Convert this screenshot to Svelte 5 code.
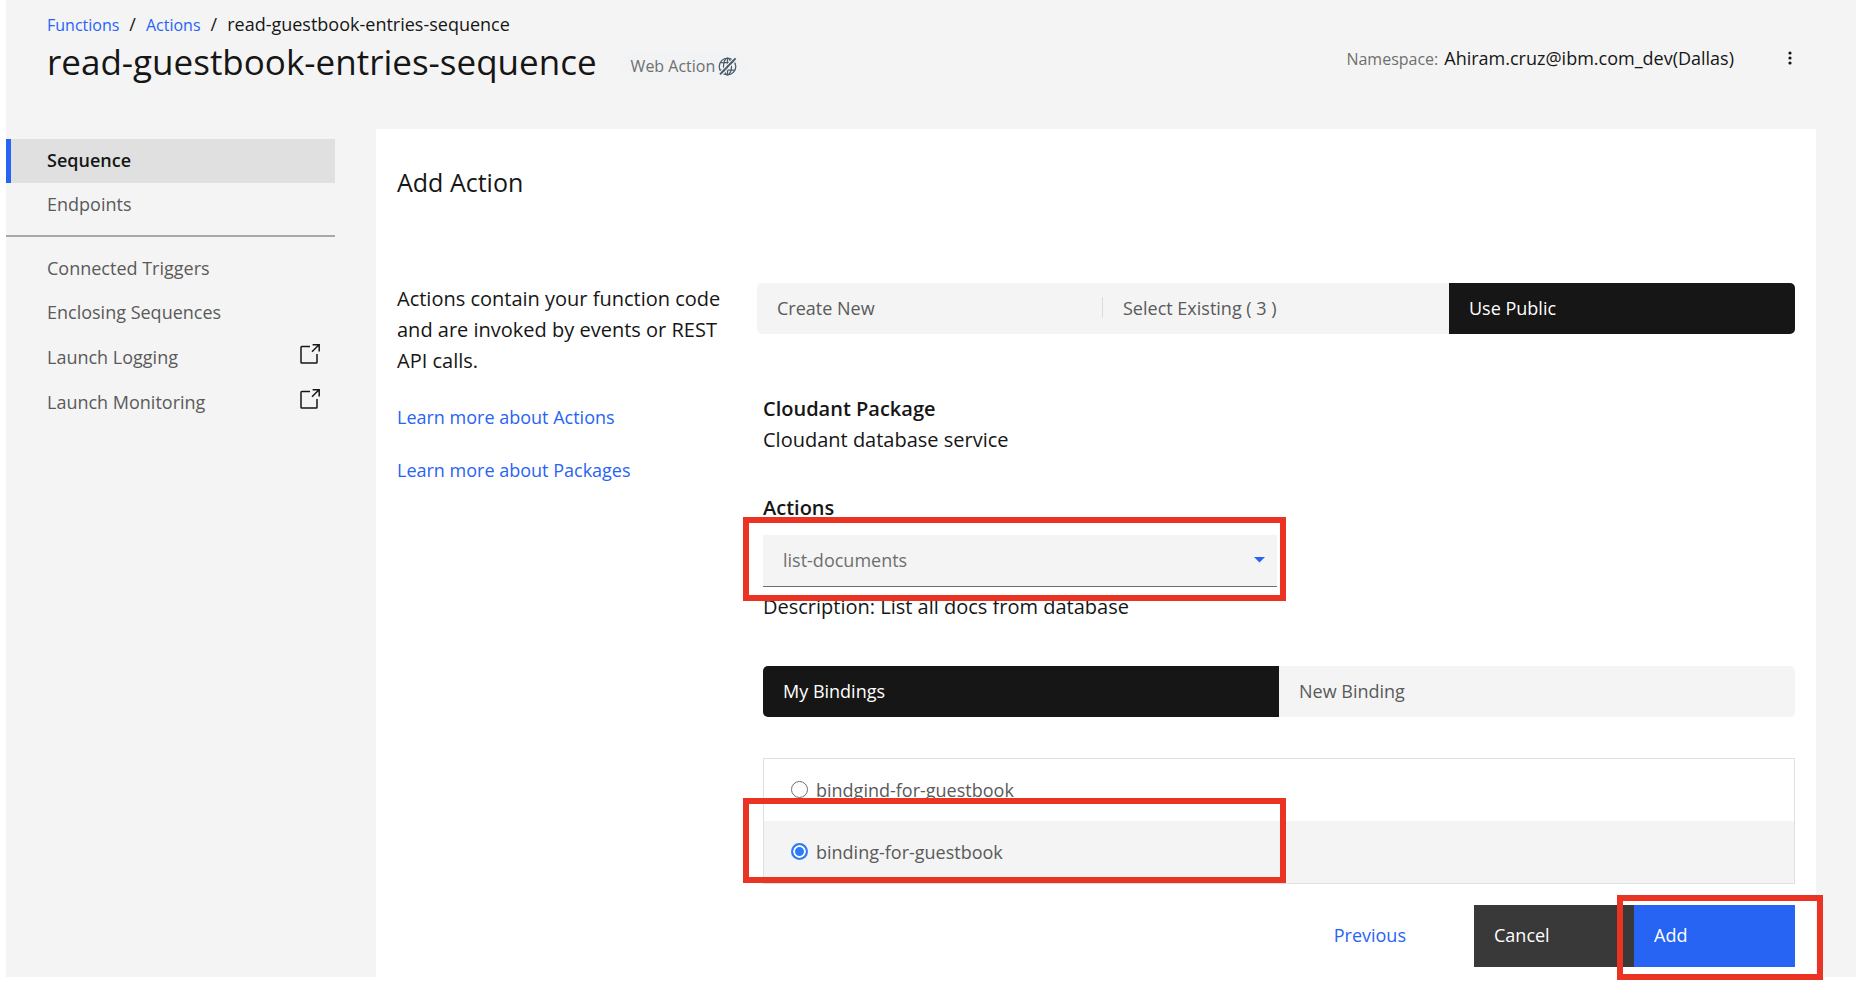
<script>
  const sequenceName = 'read-guestbook-entries-sequence';
  const primaryNav = ['Sequence', 'Endpoints'];
  const secondaryNav = [
    { label: 'Connected Triggers', external: false },
    { label: 'Enclosing Sequences', external: false },
    { label: 'Launch Logging', external: true },
    { label: 'Launch Monitoring', external: true }
  ];
  const sources = ['Create New', 'Select Existing ( 3 )', 'Use Public'];
  const bindingTabs = ['My Bindings', 'New Binding'];
  const bindings = ['bindgind-for-guestbook', 'binding-for-guestbook'];

  let page = $state('Sequence');
  let source = $state(2);
  let bindingTab = $state(0);
  let binding = $state('binding-for-guestbook');
  let action = $state('list-documents');
</script>

{#snippet tabs(items, current, choose)}
  <div class="tabs" role="tablist">
    {#each items as item, i}
      <button
        type="button"
        role="tab"
        class="tab"
        class:active={i === current}
        class:divided={i !== current && i + 1 < items.length && i + 1 !== current}
        aria-selected={i === current}
        onclick={() => choose(i)}>{item}</button>
    {/each}
  </div>
{/snippet}

<div class="page">
  <header>
    <div class="heading">
      <nav class="crumbs" aria-label="Breadcrumb">
        <a href="#functions">Functions</a>
        <span>/</span>
        <a href="#actions">Actions</a>
        <span>/</span>
        <span>{sequenceName}</span>
      </nav>
      <div class="title">
        <h1>{sequenceName}</h1>
        <span class="badge">
          Web Action
          <svg width="19" height="19" viewBox="0 0 19 19" fill="none" stroke="#4d5d69" aria-hidden="true">
            <g stroke-width="1.3">
              <circle cx="9.5" cy="9.5" r="8.3" />
              <ellipse cx="9.5" cy="9.5" rx="4" ry="8.3" />
              <path d="M9.5 1.2v16.6M2.4 5.6h14.2M2.4 13.2h14.2" />
            </g>
            <path d="M1.2 16L16 0.8M3.4 18.4L18.4 3" stroke="#f1f3f5" stroke-width="1.2" />
            <path d="M2 17.4L17.6 1.4" stroke-width="2" />
          </svg>
        </span>
      </div>
    </div>
    <div class="namespace">
      <span class="key">Namespace:</span>
      <span>Ahiram.cruz@ibm.com_dev(Dallas)</span>
      <button type="button" class="more" aria-label="More options">
        <svg width="4" height="16" viewBox="0 0 4 16" fill="#161616" aria-hidden="true">
          <circle cx="2" cy="2" r="1.6" /><circle cx="2" cy="7" r="1.6" /><circle cx="2" cy="12" r="1.6" />
        </svg>
      </button>
    </div>
  </header>

  <div class="body">
    <nav class="side" aria-label="Sequence sections">
      {#each primaryNav as label}
        <a href="#{label}" class:current={page === label} onclick={() => (page = label)}>{label}</a>
      {/each}
      <hr />
      {#each secondaryNav as item}
        <a href="#{item.label}" class:external={item.external}>
          {item.label}
          {#if item.external}
            <svg width="20" height="20" viewBox="0 0 20 20" fill="none" stroke="#161616" stroke-width="1.5" aria-hidden="true">
              <path d="M10 2.6H1.8q-.8 0-.8.8v14.8q0 .8.8.8h14.4q.8 0 .8-.8v-8.2" />
              <path d="M12 7.8l7-7M12.6.8h6.6v6.6" />
            </svg>
          {/if}
        </a>
      {/each}
    </nav>

    <main>
      <h2>Add Action</h2>
      <div class="columns">
        <aside>
          <p>Actions contain your function code and are invoked by events or REST API calls.</p>
          <a href="#about-actions">Learn more about Actions</a>
          <a href="#about-packages">Learn more about Packages</a>
        </aside>

        <form onsubmit={(e) => e.preventDefault()}>
          {@render tabs(sources, source, (i) => (source = i))}

          <div class="details">
            <h3>Cloudant Package</h3>
            <p>Cloudant database service</p>

            <label class="actions-label" for="action">Actions</label>
            <div class="picker">
              <select id="action" bind:value={action}>
                <option>list-documents</option>
              </select>
              <svg width="11" height="6" viewBox="0 0 11 6" fill="#2864f4" aria-hidden="true"><path d="M0 0h11L5.5 5.5z" /></svg>
              <span class="callout callout-select"></span>
            </div>
            <p>Description: List all docs from database</p>

            <div class="binding-tabs">
              {@render tabs(bindingTabs, bindingTab, (i) => (bindingTab = i))}
            </div>

            <div class="bindings" role="radiogroup" aria-label="Bindings">
              {#each bindings as name}
                <label class:chosen={binding === name}>
                  <input type="radio" name="binding" value={name} bind:group={binding} />
                  {name}
                </label>
              {/each}
              <span class="callout callout-binding"></span>
            </div>

            <div class="buttons">
              <button type="button" class="previous">Previous</button>
              <button type="button" class="cancel">Cancel</button>
              <div class="submit">
                <button type="submit" class="add">Add</button>
                <span class="callout callout-add"></span>
              </div>
            </div>
          </div>
        </form>
      </div>
    </main>
  </div>
</div>

<style>
  :global(body) {
    min-height: 100vh;
    background: #fff;
  }

  .page {
    margin-left: 6px;
    background: #f4f4f4;
    color: #161616;
    font: 18px/24px 'Open Sans', 'Noto Sans', sans-serif;
  }

  .page :is(h1, h2, h3, p) {
    margin: 0;
  }

  a {
    color: #2864f4;
    text-decoration: none;
  }

  button,
  select {
    border: 0;
    border-radius: 0;
    background: none;
    color: inherit;
    font: inherit;
    cursor: pointer;
  }

  header {
    display: flex;
    justify-content: space-between;
    align-items: flex-start;
    min-height: 117px;
    padding: 12px 64px 0 41px;
  }

  .crumbs {
    display: flex;
    align-items: baseline;
    gap: 10px;
  }

  .crumbs a {
    font-size: 16px;
  }

  .title {
    display: flex;
    align-items: center;
    gap: 24px;
  }

  h1 {
    font-size: 35px;
    font-weight: 400;
    line-height: 50px;
  }

  .badge {
    display: flex;
    align-items: center;
    gap: 3px;
    margin-top: 8px;
    padding: 3px 10px;
    border-radius: 15px;
    background: #f1f3f5;
    color: #6f6f6f;
    font-size: 16px;
  }

  .namespace {
    display: flex;
    align-items: baseline;
    gap: 6px;
    padding-top: 34px;
  }

  .key {
    color: #6f6f6f;
    font-size: 16px;
  }

  .more {
    display: flex;
    align-self: center;
    margin-left: 48px;
    padding: 0;
  }

  .body {
    display: grid;
    grid-template-columns: 329px minmax(0, 1fr);
    gap: 41px;
    padding-right: 40px;
  }

  .side {
    display: flex;
    flex-direction: column;
    padding-top: 10px;
  }

  .side a {
    display: flex;
    justify-content: space-between;
    align-items: flex-start;
    padding: 0 15px 2px 41px;
    color: #5a5a5a;
    line-height: 42px;
  }

  .side a.current {
    padding-left: 36px;
    border-left: 5px solid #2864f4;
    background: #e0e0e0;
    color: #161616;
    font-weight: 600;
  }

  .side a.external {
    padding-top: 1px;
  }

  .side svg {
    margin-top: 8px;
  }

  hr {
    width: 100%;
    height: 2px;
    margin: 8px 0 10px;
    border: 0;
    background: #a8a8a8;
  }

  main {
    padding: 36px 21px 10px;
    background: #fff;
  }

  h2 {
    font-size: 25px;
    font-weight: 400;
    line-height: 34px;
  }

  .columns {
    display: grid;
    grid-template-columns: 330px minmax(0, 1fr);
    gap: 30px;
    margin-top: 84px;
  }

  p,
  h3,
  .actions-label {
    font-size: 20px;
    line-height: 31px;
  }

  aside {
    display: flex;
    flex-direction: column;
    align-items: flex-start;
    gap: 29px;
  }

  .tabs {
    display: flex;
    overflow: hidden;
    border-radius: 5px;
    background: #f4f4f4;
  }

  .tab {
    display: flex;
    flex: 1;
    align-items: center;
    height: 51px;
    padding: 0 0 2px 20px;
    color: #5a5a5a;
    text-align: left;
  }

  .tab.active {
    background: #161616;
    color: #fff;
  }

  .tab.divided::after {
    content: '';
    width: 1px;
    height: 21px;
    margin-left: auto;
    background: #dcdcdc;
  }

  .details {
    padding: 59px 0 0 6px;
  }

  h3,
  .actions-label {
    font-weight: 600;
  }

  .actions-label {
    display: block;
    margin-top: 37px;
  }

  .picker {
    position: relative;
    display: flex;
    align-items: center;
    width: 50%;
    max-width: 514px;
    margin: 12px 0 4px;
  }

  select {
    width: 100%;
    height: 52px;
    padding: 0 40px 2px 20px;
    border-bottom: 1px solid #6f6f6f;
    background: #f4f4f4;
    color: #6f6f6f;
    appearance: none;
  }

  .picker svg {
    margin: 0 0 2px -23px;
    pointer-events: none;
  }

  .binding-tabs {
    margin: 44px 0 41px;
  }

  .bindings {
    position: relative;
    border: 1px solid #e0e0e0;
  }

  .bindings label {
    display: flex;
    align-items: center;
    gap: 8px;
    height: 62px;
    padding-left: 27px;
    color: #5a5a5a;
  }

  .bindings label.chosen {
    background: #f4f4f4;
  }

  input {
    width: 17px;
    height: 17px;
    margin: 0 0 2px;
    border: 1px solid #6f6f6f;
    border-radius: 50%;
    background: #fff;
    appearance: none;
  }

  input:checked {
    border: 2px solid #2f7bf6;
    background: #2f7bf6;
    box-shadow: inset 0 0 0 2px #fff;
  }

  .buttons {
    display: flex;
    justify-content: flex-end;
    align-items: center;
    margin-top: 21px;
  }

  .buttons button {
    height: 62px;
    padding: 0 20px 2px;
    text-align: left;
  }

  .buttons .previous {
    margin-right: 48px;
    color: #2864f4;
  }

  .buttons .cancel {
    width: 160px;
    background: #393939;
    color: #fff;
  }

  .submit {
    position: relative;
  }

  .buttons .add {
    width: 161px;
    background: #2864f4;
    color: #fff;
  }

  .callout {
    position: absolute;
    border: 6px solid #ea3323;
    pointer-events: none;
  }

  .callout-select {
    inset: -18px -9px -14px -20px;
  }

  .callout-binding {
    left: -21px;
    right: 50%;
    top: 39px;
    bottom: 0;
    margin-right: -7px;
  }

  .callout-add {
    inset: -10px -28px -13px -17px;
  }
</style>
